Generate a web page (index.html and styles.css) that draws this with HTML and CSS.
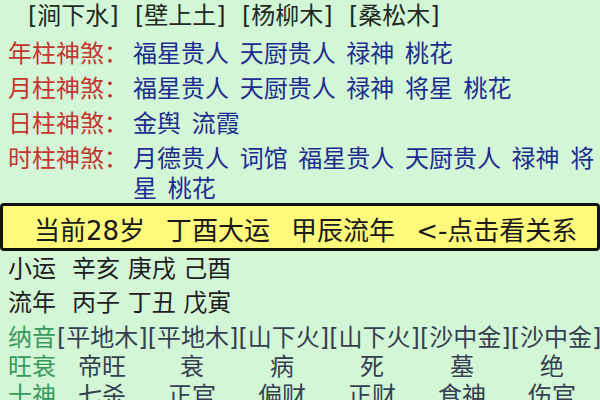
FILE: index.html
```html
<!DOCTYPE html>
<html lang="zh">
<head>
<meta charset="utf-8">
<link rel="stylesheet" href="styles.css">
</head>
<body>
<div class="page">
  <div class="top">
    <div class="nayin-line">
      <span class="ny">[涧下水]</span>
      <span class="ny">[壁上土]</span>
      <span class="ny">[杨柳木]</span>
      <span class="ny">[桑松木]</span>
    </div>
    <div class="row"><div class="label">年柱神煞：</div><div class="val">福星贵人 天厨贵人 禄神 桃花</div></div>
    <div class="row"><div class="label">月柱神煞：</div><div class="val">福星贵人 天厨贵人 禄神 将星 桃花</div></div>
    <div class="row"><div class="label">日柱神煞：</div><div class="val">金舆 流霞</div></div>
    <div class="row"><div class="label">时柱神煞：</div><div class="val">月德贵人 词馆 福星贵人 天厨贵人 禄神 将星 桃花</div></div>
  </div>
  <div class="bar">
    <span>当前28岁</span>
    <span>丁酉大运</span>
    <span>甲辰流年</span>
    <span class="link">&lt;-点击看关系</span>
  </div>
  <div class="bottom">
    <div class="yun"><span class="yl">小运</span><span class="yv">辛亥 庚戌 己酉</span></div>
    <div class="yun second"><span class="yl">流年</span><span class="yv">丙子 丁丑 戊寅</span></div>
    <div class="grow first">
      <span class="glabel">纳音</span>
      <span class="cell ny2">[平地木]</span>
      <span class="cell ny2">[平地木]</span>
      <span class="cell ny2">[山下火]</span>
      <span class="cell ny2">[山下火]</span>
      <span class="cell ny2">[沙中金]</span>
      <span class="cell ny2">[沙中金]</span>
      <span class="cell ny2 faded">[大林木]</span>
    </div>
    <div class="grow">
      <span class="glabel">旺衰</span>
      <span class="cell c">帝旺</span>
      <span class="cell c">衰</span>
      <span class="cell c">病</span>
      <span class="cell c">死</span>
      <span class="cell c">墓</span>
      <span class="cell c">绝</span>
    </div>
    <div class="grow">
      <span class="glabel">十神</span>
      <span class="cell c">七杀</span>
      <span class="cell c">正官</span>
      <span class="cell c">偏财</span>
      <span class="cell c">正财</span>
      <span class="cell c">食神</span>
      <span class="cell c">伤官</span>
    </div>
  </div>
</div>
</body>
</html>
```

FILE: styles.css
```css
html, body {
  margin: 0;
  padding: 0;
}
body {
  width: 600px;
  height: 400px;
  overflow: hidden;
  background: #d3f6d7;
  font-family: "DejaVu Sans", "Noto Sans CJK SC", sans-serif;
  font-size: 24px;
  color: #1e1e1e;
}
.page {
  width: 600px;
}
.top {
  padding: 1px 0 0 8px;
}
.nayin-line {
  display: flex;
  height: 30px;
  line-height: 30px;
  padding-left: 20px;
  margin-bottom: 8px;
  color: #1e2a22;
  white-space: nowrap;
}
.ny {
  width: 107px;
}
.row {
  display: flex;
  line-height: 30px;
  margin-bottom: 5px;
}
.row:last-child {
  margin-bottom: 0;
}
.label {
  flex: 0 0 125px;
  color: #c3352e;
  white-space: nowrap;
}
.val {
  flex: 1;
  color: #1d2c8e;
  word-spacing: 3px;
}
.bar {
  display: flex;
  align-items: center;
  gap: 21px;
  height: 40px;
  border: 3px solid #111;
  border-radius: 4px;
  background: #fdf97a;
  padding: 2px 0 0 31px;
  box-sizing: content-box;
  font-size: 26px;
  color: #1a1a1a;
  white-space: nowrap;
  margin-top: -1px;
}
.bottom {
  padding-left: 8px;
}
.yun {
  display: flex;
  line-height: 30px;
  margin-top: 3px;
  white-space: nowrap;
}
.yun.second {
  margin-top: 4px;
}
.yl {
  width: 64px;
}
.grow {
  display: flex;
  line-height: 29px;
  white-space: nowrap;
}
.grow.first {
  margin-top: 6px;
}
.glabel {
  flex: 0 0 49px;
  color: #3a9a5c;
}
.cell {
  flex: 0 0 90px;
  color: #34404f;
}
.cell.c {
  text-align: center;
}
.cell.faded {
  color: #8a9a92;
}
```
